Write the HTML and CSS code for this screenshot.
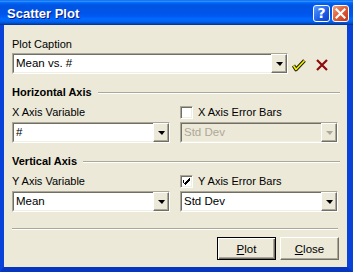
FILE: index.html
```html
<!DOCTYPE html>
<html lang="en">

<head>
  <meta charset="utf-8" />
  <title>Scatter Plot</title>
  <link rel="stylesheet" href="styles.css">
</head>

<body>
  <div class="window">
    <div class="titlebar">
      <span class="title">Scatter Plot</span>
      <div class="caption-buttons">
        <span class="cap-btn help">?</span>
        <span class="cap-btn close">
          <svg width="11" height="11" viewBox="0 0 11 11">
            <path d="M1.5 1.5 L9.5 9.5 M9.5 1.5 L1.5 9.5" stroke="#fff" stroke-width="2.2" stroke-linecap="square" />
          </svg>
        </span>
      </div>
    </div>

    <div class="client">
      <div class="label caption-label">Plot Caption</div>
      <div class="caption-row">
        <div class="combo caption-combo">
          <span class="value">Mean vs. #</span>
          <span class="drop"><i class="arrow"></i></span>
        </div>
        <svg class="icon-ok" width="14" height="14" viewBox="0 0 14 14">
          <path d="M1.5 7.5 L4 11.5 L12.5 2.5" fill="none" stroke="#1b1b00" stroke-width="3.6" stroke-linejoin="round" />
          <path d="M1.5 7.5 L4 11.5 L12.5 2.5" fill="none" stroke="#f3f300" stroke-width="1.6" stroke-linejoin="round" />
        </svg>
        <svg class="icon-cancel" width="14" height="14" viewBox="0 0 14 14">
          <path d="M2 2 L12 12 M12 2 L2 12" stroke="#8c0d0d" stroke-width="2.2" />
        </svg>
      </div>

      <div class="group-head">
        <span>Horizontal Axis</span>
        <div class="rule"></div>
      </div>
      <div class="axis-grid">
        <div class="label">X Axis Variable</div>
        <div class="check"><span class="box"></span>X Axis Error Bars</div>
        <div class="combo">
          <span class="value">#</span>
          <span class="drop"><i class="arrow"></i></span>
        </div>
        <div class="combo disabled">
          <span class="value">Std Dev</span>
          <span class="drop"><i class="arrow"></i></span>
        </div>
      </div>

      <div class="group-head">
        <span>Vertical Axis</span>
        <div class="rule"></div>
      </div>
      <div class="axis-grid">
        <div class="label">Y Axis Variable</div>
        <div class="check">
          <span class="box">
            <svg width="7" height="7" viewBox="0 0 7 7">
              <path d="M0 2h1v3h1v-1h1v-1h1v-1h1v-1h1v-1h1v3h-1v1h-1v1h-1v1h-1v1h-1v-1h-1v-1h-1z" fill="#000" />
            </svg>
          </span>Y Axis Error Bars
        </div>
        <div class="combo">
          <span class="value">Mean</span>
          <span class="drop"><i class="arrow"></i></span>
        </div>
        <div class="combo">
          <span class="value">Std Dev</span>
          <span class="drop"><i class="arrow"></i></span>
        </div>
      </div>

      <div class="rule bottom-rule"></div>

      <div class="buttons">
        <button class="btn default"><u>P</u>lot</button>
        <button class="btn"><u>C</u>lose</button>
      </div>
    </div>
  </div>
</body>

</html>
```

FILE: styles.css
```css
body {
  margin: 0;
  font-family: "Liberation Sans", Arial, sans-serif;
  font-size: 11px;
  background: #ece9d8;
}

.window {
  width: 353px;
  height: 272px;
  display: flex;
  flex-direction: column;
}

.titlebar {
  height: 25px;
  flex-shrink: 0;
  display: flex;
  align-items: center;
  justify-content: space-between;
  padding: 0 4px 0 7px;
  background: linear-gradient(#0058ee 0%, #3593ff 4%, #288eff 6%, #127dff 8%, #036ffc 10%, #0262ee 14%, #0057e5 20%, #0054e3 24%, #0055eb 56%, #005bf5 66%, #026afe 76%, #0062ef 86%, #0052d6 92%, #0040ab 96%, #003092 100%);
}

.title {
  color: #fff;
  font-weight: bold;
  font-size: 13px;
  text-shadow: 1px 1px #0a1883;
  padding-top: 1px;
}

.caption-buttons {
  display: flex;
  gap: 2px;
  padding-top: 1px;
}

.cap-btn {
  width: 15px;
  height: 15px;
  border: 1px solid #fff;
  border-radius: 3px;
  display: flex;
  align-items: center;
  justify-content: center;
}

.help {
  background: linear-gradient(135deg, #5a9cff, #1c5be6 60%, #0a43c8);
  color: #fff;
  font-weight: bold;
  font-size: 14px;
  font-family: "DejaVu Sans", sans-serif;
}

.close {
  background: linear-gradient(135deg, #f0a080, #e06038 45%, #c2351a);
}

.client {
  flex: 1;
  background: #ece9d8;
  border-left: 4px solid #0842d8;
  border-right: 6px solid #0842d8;
  border-bottom: 5px solid #0636c0;
  padding: 13px 7px 0 8px;
}

.label {
  line-height: 13px;
  color: #000;
}

.caption-label {
  margin-bottom: 2px;
}

.caption-row {
  display: flex;
  align-items: center;
}

.caption-combo {
  width: 276px;
}

.icon-ok {
  margin-left: 4px;
  margin-top: 3px;
}

.icon-cancel {
  margin-left: 9px;
  margin-top: 3px;
}

/* classic sunken combo box */
.combo {
  height: 21px;
  box-sizing: border-box;
  border: 1px solid;
  border-color: #aca899 #fff #fff #aca899;
  display: flex;
}

.combo .value {
  flex: 1;
  background: #fff;
  border-top: 1px solid #716f64;
  border-left: 1px solid #716f64;
  border-bottom: 1px solid #f1efe2;
  padding-left: 2px;
  line-height: 17px;
  font-size: 11.5px;
}

.drop {
  width: 16px;
  box-sizing: border-box;
  background: #ece9d8;
  border: 1px solid;
  border-color: #fff #716f64 #716f64 #fff;
  box-shadow: inset -1px -1px #aca899;
  display: flex;
  align-items: center;
  justify-content: center;
}

.arrow {
  width: 0;
  height: 0;
  border-left: 4px solid transparent;
  border-right: 3px solid transparent;
  border-top: 4px solid #000;
  margin-top: 1px;
}

.disabled .value {
  background: #ece9d8;
  color: #aca899;
}

.disabled .arrow {
  border-top-color: #aca899;
}

.group-head {
  display: flex;
  align-items: center;
  gap: 6px;
  margin-top: 12px;
  font-weight: bold;
  line-height: 13px;
}

.group-head .rule {
  flex: 1;
}

.rule {
  height: 1px;
  background: #aca899;
  border-bottom: 1px solid #fff;
}

.axis-grid {
  display: grid;
  grid-template-columns: 158px 158px;
  column-gap: 10px;
  row-gap: 3px;
  margin-top: 7px;
}

.check {
  display: flex;
  align-items: center;
  gap: 5px;
  line-height: 13px;
}

.box {
  width: 13px;
  height: 13px;
  box-sizing: border-box;
  border: 1px solid;
  border-color: #aca899 #fff #fff #aca899;
  box-shadow: inset 1px 1px #716f64, inset -1px -1px #f1efe2;
  background: #fff;
  display: flex;
  align-items: center;
  justify-content: center;
}

.bottom-rule {
  margin-top: 16px;
  margin-right: 2px;
}

.buttons {
  display: flex;
  justify-content: flex-end;
  gap: 4px;
  margin-top: 7px;
  padding-right: 1px;
}

.btn {
  width: 59px;
  height: 23px;
  box-sizing: border-box;
  font-family: "Liberation Sans", Arial, sans-serif;
  font-size: 11.5px;
  color: #000;
  background: #ece9d8;
  border: 1px solid;
  border-color: #fff #716f64 #716f64 #fff;
  box-shadow: inset -1px -1px #aca899;
  padding: 0;
}

.btn.default {
  border: 1px solid #000;
  box-shadow: inset 1px 1px #fff, inset -1px -1px #716f64, inset -2px -2px #aca899;
}
```
